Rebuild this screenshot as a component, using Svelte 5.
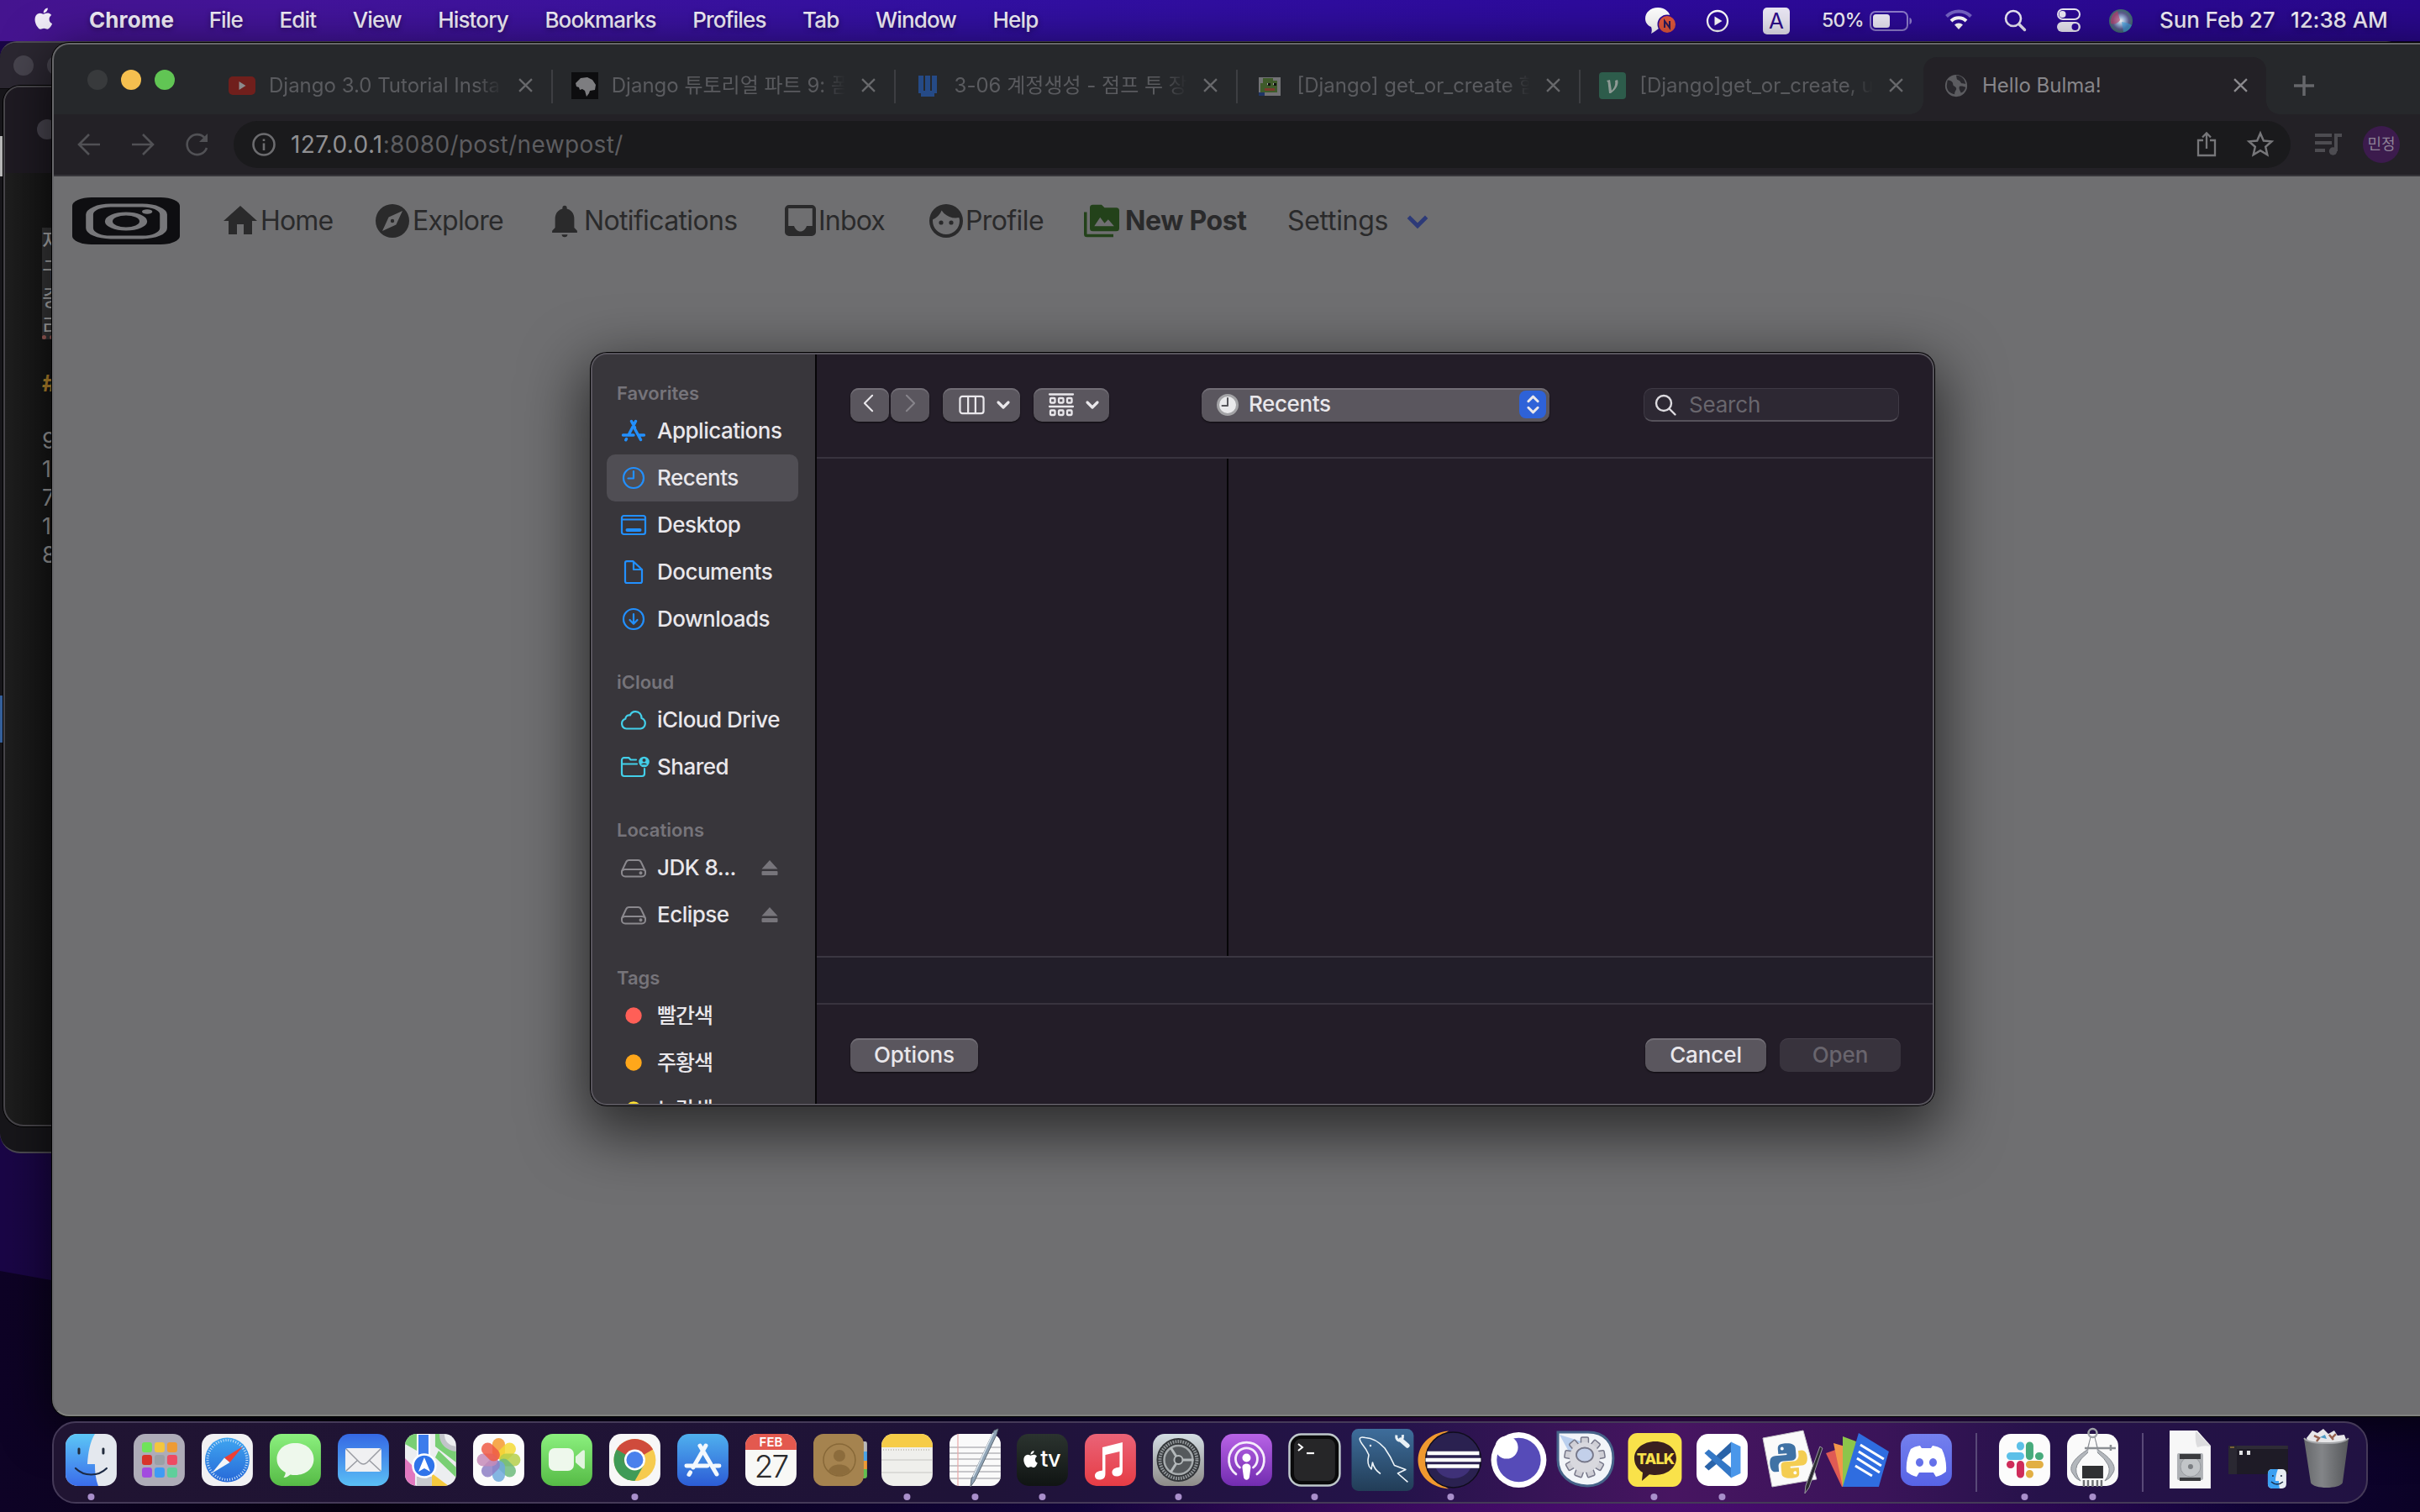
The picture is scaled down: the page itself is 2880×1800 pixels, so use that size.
<script>
  const menus = ['File', 'Edit', 'View', 'History', 'Bookmarks', 'Profiles', 'Tab', 'Window', 'Help'];

  const tabs = [
    { icon: 'youtube', title: 'Django 3.0 Tutorial Insta' },
    { icon: 'mdn', title: 'Django 튜토리얼 파트 9: 폼(' },
    { icon: 'wiki', title: '3-06 계정생성 - 점프 투 장고' },
    { icon: 'pepe', title: '[Django] get_or_create 함' },
    { icon: 'velog', title: '[Django]get_or_create, u' },
    { icon: 'globe', title: 'Hello Bulma!', active: true },
  ];

  const links = [
    { icon: 'home', label: 'Home' },
    { icon: 'compass', label: 'Explore' },
    { icon: 'bell', label: 'Notifications' },
    { icon: 'inbox', label: 'Inbox' },
    { icon: 'face', label: 'Profile' },
    { icon: 'album', label: 'New Post', strong: true },
  ];

  const groups = [
    {
      title: 'Favorites',
      items: [
        { icon: 'apps', label: 'Applications' },
        { icon: 'clock', label: 'Recents', selected: true },
        { icon: 'desk', label: 'Desktop' },
        { icon: 'doc', label: 'Documents' },
        { icon: 'download', label: 'Downloads' },
      ],
    },
    {
      title: 'iCloud',
      items: [
        { icon: 'cloud', label: 'iCloud Drive' },
        { icon: 'shared', label: 'Shared' },
      ],
    },
    {
      title: 'Locations',
      items: [
        { icon: 'disk', label: 'JDK 8...', eject: true },
        { icon: 'disk', label: 'Eclipse', eject: true },
      ],
    },
    {
      title: 'Tags',
      items: [
        { icon: 'red', label: '빨간색', tag: true },
        { icon: 'orange', label: '주황색', tag: true },
        { icon: 'yellow', label: '노란색', tag: true },
      ],
    },
  ];

  const dockApps = [
    { name: 'finder', open: true }, { name: 'launchpad' }, { name: 'safari' }, { name: 'messages' },
    { name: 'mail' }, { name: 'maps' }, { name: 'photos' }, { name: 'facetime' },
    { name: 'chrome', open: true }, { name: 'appstore' }, { name: 'calendar' }, { name: 'contacts' },
    { name: 'notes', open: true }, { name: 'textedit', open: true }, { name: 'tv', open: true }, { name: 'music' },
    { name: 'settings', open: true }, { name: 'podcasts' }, { name: 'terminal', open: true }, { name: 'mysql' },
    { name: 'eclipse', open: true }, { name: 'insomnia' }, { name: 'automator' }, { name: 'talk', open: true },
    { name: 'vscode', open: true }, { name: 'python' }, { name: 'docs' }, { name: 'discord' },
  ];
  const dockTools = [{ name: 'slack', open: true }, { name: 'caliper', open: true }];
  const dockFiles = [{ name: 'diskimage' }, { name: 'window' }, { name: 'trash' }];

  const pads = ['#6fe35a', '#f3c63f', '#ee9b35', '#d8342b', '#9aa0a6', '#ee4a63', '#a24be0', '#3f9bf5', '#5fcf9b'];
  const petals = ['#f59a2f', '#f3d935', '#b5cf4a', '#6fbb7c', '#6fa9dc', '#8d7fc4', '#c58bb8', '#ee5a45'];
  const cogs = [0, 40, 80, 120, 160, 200, 240, 280, 320];
  const scribbles = ['9', '1', '7', '1', '8'];
</script>

{#snippet appleShape()}
  <path d="M20.6 16.9c0-3.2 2.600-4.700 2.700-4.800-1.500-2.200-3.800-2.500-4.600-2.500-2-.2-3.800 1.200-4.800 1.200s-2.500-1.100-4.100-1.100c-2.100 0-4.100 1.200-5.200 3.100-2.200 3.900-.6 9.600 1.600 12.700 1.100 1.500 2.300 3.300 4 3.200 1.600-.1 2.200-1 4.100-1s2.500 1 4.200 1c1.700 0 2.800-1.600 3.900-3.100 1.200-1.800 1.700-3.500 1.700-3.600-.1 0-3.500-1.300-3.500-5.100zM17.500 7.600c.9-1.100 1.500-2.500 1.300-4-1.300.1-2.800.9-3.700 1.900-.8.9-1.500 2.400-1.300 3.900 1.400.1 2.800-.7 3.700-1.800z" />
{/snippet}

{#snippet tabIcon(name)}
  <svg class="favicon" viewBox="0 0 32 32">
    {#if name === 'youtube'}
      <rect x="0" y="5" width="32" height="22" rx="5" fill="#701f1c" /><path d="M12.500 11v10l8-5z" fill="#8b8b8d" />
    {:else if name === 'mdn'}
      <rect width="32" height="32" fill="#0d0d0f" /><path d="M5 13l3-3 3-3 8-1 6 3 4 6-1 6-6 1-1 3-3 4-2-7-3-2-3 1-1-3-3-1z" fill="#7d7d80" />
    {:else if name === 'wiki'}
      <path d="M5 4h6v18h2V4h6v18h2V4h6v21h-3v4H8v-4H5z" fill="#254a86" />
    {:else if name === 'pepe'}
      <rect x="3" y="6" width="26" height="22" fill="#727275" /><path d="M8 7h12v3h5v14H5V13h3z" fill="#3f5b2a" /><path d="M13 13h4v2h-4zM20 13h4v2h-4z" fill="#a9a9ab" /><path d="M14 13h3v3h-3zM21 13h3v3h-3z" fill="#111" /><path d="M10 19h12v3H10z" fill="#7c3a2c" /><path d="M3 24h7v4H3z" fill="#1f3566" />
    {:else if name === 'velog'}
      <rect width="32" height="32" rx="4" fill="#2d5c4b" /><path d="M9 10l4-1 2 13c3-3 5-7 4-12l3-1c2 5-2 12-8 16h-2L10.500 12z" fill="#8e9a95" />
    {:else}
      <circle cx="16" cy="16" r="14" fill="#5c5c60" /><path d="M5 9c4 0 7 2 7 5s3 2 4 5-2 3-2 8c-6-1-10-5-10-11zM16 3c1 4 0 5 3 6s2 4 5 4 4 1 4 1c-1-6-5-11-12-11zM20 17c3-1 5 0 8 1-1 4-3 6-6 7-1-3-3-5-2-8z" fill="#29282d" />
    {/if}
  </svg>
{/snippet}

{#snippet navIcon(name)}
  <svg class="nav-icon" viewBox="0 0 48 48">
    {#if name === 'home'}
      <path d="M20 40V28h8v12h10V24h6L24 6 4 24h6v16z" />
    {:else if name === 'compass'}
      <path d="M24 21.800a2.200 2.200 0 1 0 0 4.400 2.200 2.200 0 0 0 0-4.400zM24 4a20 20 0 1 0 0 40 20 20 0 0 0 0-40zm4.400 24.400L12 36l7.600-16.400L36 12z" />
    {:else if name === 'bell'}
      <path d="M24 46a4 4 0 0 0 4-3.500h-8A4 4 0 0 0 24 46zm13-13V21c0-7-4-12-10-13.500V6a3 3 0 0 0-6 0v1.500C15 9 11 14 11 21v12l-4 4.500V40h34v-2.500z" />
    {:else if name === 'inbox'}
      <path fill-rule="evenodd" d="M10 5h27a5 5 0 0 1 5 5v27a5 5 0 0 1-5 5H10a5 5 0 0 1-5-5V10a5 5 0 0 1 5-5zm-.8 4V30H16c1.500 4 4 6.500 7.500 6.500s6-2.500 7.500-6.500h6.800V9z" />
    {:else if name === 'face'}
      <path fill-rule="evenodd" d="M24 4a20 20 0 1 0 0 40 20 20 0 0 0 0-40zm0 36A16 16 0 0 1 8 24c0-.6.100-1.200.200-1.700 4.700-2 8.500-6 10.400-10.800A20 20 0 0 0 39.300 20c.5 1.300.7 2.600.7 4a16 16 0 0 1-16 16z" /><circle cx="18" cy="26" r="2.600" /><circle cx="30" cy="26" r="2.600" />
    {:else}
      <path fill-rule="evenodd" d="M4 12H0v30a4 4 0 0 0 4 4h36v-4H4zM44 6H28l-4-4H12a4 4 0 0 0-4 4v28a4 4 0 0 0 4 4h32a4 4 0 0 0 4-4V10a4 4 0 0 0-4-4zM14 31l8-12 6 8 5-5 8 9z" />
    {/if}
  </svg>
{/snippet}

{#snippet sideIcon(name)}
  <svg class="side-icon {name}" viewBox="0 0 34 34">
    {#if name === 'apps'}
      <g stroke-width="3.400"><path d="M19.500 5.500L11.500 21M14.500 5.500l4 7.500M18.700 15l6.800 12.500M4.500 22H17M23 22h6.500" /><path d="M8.500 26.500l-.8 1.300" /></g>
    {:else if name === 'clock'}
      <circle cx="17" cy="17" r="12" /><path d="M17 9v8.500h-6.500" />
    {:else if name === 'desk'}
      <rect x="3" y="6" width="28" height="22" rx="2.500" /><path d="M3 10.500h28" /><path d="M9.500 23h15" stroke-width="4" />
    {:else if name === 'doc'}
      <path d="M9 4.200h7.500L27 14v14a2 2 0 0 1-2 2H9a2 2 0 0 1-2-2V6.200a2 2 0 0 1 2-2zM17 4.500V14h9.500" />
    {:else if name === 'download'}
      <circle cx="17" cy="17" r="12" /><path d="M17 11v11.500M12.500 18l4.500 4.700 4.500-4.700" />
    {:else if name === 'cloud'}
      <path d="M8.500 27.500a6 6 0 0 1-1.200-11.700c.2-3.300 3-5 5.600-4.300 1.200-3 3.700-4.500 6.600-4.300 4.300.3 7 3.500 7 7.800a6.500 6.500 0 0 1-1 12.500z" />
    {:else if name === 'shared'}
      <path d="M20 8.500h-6.500l-2-2.300H5.500a2.500 2.500 0 0 0-2.500 2.500V25a3 3 0 0 0 3 3h21a3 3 0 0 0 3-3v-6M3 13.500h18" /><circle cx="29.500" cy="11" r="6.300" class="solid" /><circle cx="29.500" cy="9" r="2" class="hole" /><path d="M26 14.300c1-2.300 6-2.300 7 0z" class="hole" />
    {:else if name === 'disk'}
      <path d="M3 21l5-10.500c.7-1.600 1.700-2.500 3.500-2.500h11c1.800 0 2.800.9 3.500 2.500L31 21v2.500a4 4 0 0 1-4 4H7a4 4 0 0 1-4-4zM3.500 20.500c1-1 2-1.500 3.500-1.500h20c1.500 0 2.500.5 3.500 1.500" /><circle cx="25.500" cy="23.300" r="1" />
    {:else}
      <circle cx="17" cy="17" r="9.700" class="dot" />
    {/if}
  </svg>
{/snippet}

{#snippet dockIcon(name)}
  {#if name === 'finder'}
    <rect x="10" y="15" width="61" height="62" rx="14" fill="#e4e8ee" />
    <path d="M24 15h21c-6 10-8 22-9 36h9c0 10 1 18 4 26H24a14 14 0 0 1-14-14V29a14 14 0 0 1 14-14z" fill="url(#g-finder)" />
    <path d="M26 33v5M55 33v5" stroke="#222c3c" stroke-width="3" stroke-linecap="round" /><path d="M22 56c10 10 27 10 37 0" stroke="#1c2a44" stroke-width="2.200" fill="none" stroke-linecap="round" />
  {:else if name === 'launchpad'}
    <rect x="10" y="15" width="61" height="62" rx="14" fill="#aeacb8" />
    {#each pads as c, i}<rect x={20 + (i % 3) * 15} y={25 + Math.floor(i / 3) * 15} width="12" height="12" rx="3" fill={c} />{/each}
  {:else if name === 'safari'}
    <rect x="10" y="15" width="61" height="62" rx="14" fill="#f1f1f3" /><circle cx="40.500" cy="46" r="26.500" fill="url(#g-blue)" />
    <circle cx="40.500" cy="46" r="23.500" fill="none" stroke="#cfe4f8" stroke-width="3" stroke-dasharray="1 2" />
    <path d="M59 30L37 43.500l6.500 5.500z" fill="#ee4035" /><path d="M22 62l15-18.500 6.500 5.500z" fill="#f4f6f8" />
  {:else if name === 'messages'}
    <rect x="10" y="15" width="61" height="62" rx="14" fill="url(#g-green)" /><path d="M40.500 26c13 0 22 8 22 19s-9 19-22 19c-2 0-4-.2-6-.6-2 2-5 3.200-8 3.600 1.500-2 2.300-4 2.300-6-6.300-3.500-10.300-9-10.300-16 0-11 9-19 22-19z" fill="#eef8ec" />
  {:else if name === 'mail'}
    <rect x="10" y="15" width="61" height="62" rx="14" fill="url(#g-mail)" /><rect x="19" y="32" width="43" height="28" rx="3" fill="#f0f0f2" /><path d="M20 33l16 16q4.500 4 9 0l16-16M20 59l14-13M61 59L47 46" fill="none" stroke="#9a9ca3" stroke-width="1.500" />
  {:else if name === 'maps'}
    <g clip-path="url(#squircle)"><rect x="10" y="15" width="61" height="62" fill="#eceef0" /><path d="M10 15h14v20L10 27zM50 35l21 20v12L46 43z" fill="#79cf74" /><path d="M46 15h8c0 14 8 20 17 20v14L46 30z" fill="#79cf74" /><path d="M54 15c0 12 8 17 17 18" stroke="#c2c4ca" stroke-width="6" fill="none" /><path d="M10 44l12 12v21H10z" fill="#e178bf" /><path d="M42 62l20 15H42z" fill="#f5c93e" /><path d="M25 15h14v42H25z" fill="#3c7cec" stroke="#fff" stroke-width="2" /><path d="M24 66h18v11H24z" fill="#c8cace" /></g>
    <circle cx="33" cy="53" r="13.500" fill="#2f74ea" stroke="#fff" stroke-width="2.500" /><path d="M33 43l7 17-7-4-7 4z" fill="#fff" />
  {:else if name === 'photos'}
    <rect x="10" y="15" width="61" height="62" rx="14" fill="#fbfbfb" />
    {#each petals as c, i}<rect x="33" y="20" width="15" height="25" rx="7.500" fill={c} opacity=".85" transform="rotate({i * 45} 40.500 46)" />{/each}
  {:else if name === 'facetime'}
    <rect x="10" y="15" width="61" height="62" rx="14" fill="url(#g-green)" /><rect x="19" y="32" width="30" height="27" rx="7" fill="#eef8ec" /><path d="M51 42l8-7q3-2 3 1v19q0 3-3 1l-8-7z" fill="#e2f4df" />
  {:else if name === 'chrome'}
    <rect x="10" y="15" width="61" height="62" rx="14" fill="#f7f7f7" /><circle cx="40.500" cy="46" r="25" fill="#f6cb4f" /><path d="M40.500 46L18.850 33.500A25 25 0 0 1 62.150 33.500z" fill="#cf4b3c" /><path d="M18.850 33.500A25 25 0 0 0 40.500 71L51 52.500 40.500 46z" fill="#3f9b57" /><path d="M18.850 33.500L29.500 52 40.500 46V34h21.700z" fill="#cf4b3c" /><path d="M18.850 33.500L29.700 52.200 40.500 46z" fill="#3f9b57" /><circle cx="40.500" cy="46" r="12.500" fill="#fff" /><circle cx="40.500" cy="46" r="10" fill="#4a80ec" />
  {:else if name === 'appstore'}
    <rect x="10" y="15" width="61" height="62" rx="14" fill="url(#g-store)" /><g stroke="#f3f8fd" stroke-width="5" stroke-linecap="round"><path d="M44 29L29 55M37 29l20 34M21 53h25M55 53h5" /><path d="M25.500 61l-1.500 2.500" /></g>
  {:else if name === 'calendar'}
    <rect x="10" y="15" width="61" height="62" rx="14" fill="#f8f8f6" /><path d="M10 34v-5a14 14 0 0 1 14-14h33a14 14 0 0 1 14 14v5z" fill="#e3594f" /><text x="40.500" y="30" class="cal-month">FEB</text><text x="40.500" y="67" class="cal-day">27</text>
  {:else if name === 'contacts'}
    <path d="M66 24h6q2 0 2 3v9h-8z" fill="#b9b9b9" /><path d="M66 36h8v11h-8z" fill="#4ba3e8" /><path d="M66 47h8v10h-8z" fill="#ee9a35" /><path d="M66 57h8v8q0 3-3 3h-5z" fill="#63bf4f" />
    <rect x="10" y="15" width="60" height="62" rx="12" fill="#a5834f" /><circle cx="41" cy="46" r="19" fill="none" stroke="#876838" stroke-width="1.500" /><circle cx="41" cy="41" r="7" fill="#8c6c3c" /><path d="M28 59c3-10 23-10 26 0-7 7-19 7-26 0z" fill="#8c6c3c" />
  {:else if name === 'notes'}
    <rect x="10" y="15" width="61" height="62" rx="14" fill="#efefec" /><path d="M10 31v-2a14 14 0 0 1 14-14h33a14 14 0 0 1 14 14v2z" fill="#f6cc48" /><path d="M10 46h61M10 61h61" stroke="#d3d3d0" stroke-width="1.500" /><path d="M12 34h57" stroke="#c9c6bc" stroke-width="2" stroke-dasharray="1 2" />
  {:else if name === 'textedit'}
    <rect x="10" y="15" width="61" height="62" rx="12" fill="#fafafa" /><path d="M10 31h61M10 38h61M10 45h61M10 53h61M10 60h61M10 68h61" stroke="#b6b6ba" stroke-width="1.500" /><path d="M20 15v62" stroke="#e9a8a8" stroke-width="1.200" /><path d="M63 11l5-2-2 7-26 55-5 7 1-9z" fill="#8fa3b5" stroke="#5b6772" stroke-width="1" /><path d="M62 14L38 66" stroke="#dfe9f1" stroke-width="1.500" />
  {:else if name === 'tv'}
    <rect x="10" y="15" width="61" height="62" rx="14" fill="url(#g-tv)" /><g transform="translate(15.500 32) scale(.8)" fill="#fff">{@render appleShape()}</g><text x="50" y="54.500" class="tv-label">tv</text>
  {:else if name === 'music'}
    <rect x="10" y="15" width="61" height="62" rx="14" fill="url(#g-music)" /><path d="M31 31l24-6v33c0 5-2 7-6 7.500-4 .5-6.500-1.500-6.500-4.500 0-4 3-5.500 9-6.500V36l-17 4v22c0 5-2 7-6 7.500-4 .5-6.500-1.500-6.500-4.500 0-4 3-5.500 9-6.500z" fill="#fff" />
  {:else if name === 'settings'}
    <rect x="10" y="15" width="61" height="62" rx="14" fill="url(#g-grey)" /><circle cx="40.500" cy="46" r="26" fill="#34373a" /><circle cx="40.500" cy="46" r="22" fill="none" stroke="#8f9497" stroke-width="4" stroke-dasharray="1.800 1.200" /><circle cx="40.500" cy="46" r="17" fill="#55595c" stroke="#a6abad" stroke-width="2.500" /><path d="M40.500 46L31 31M40.500 46h18M40.500 46L31 61" stroke="#b4b9bb" stroke-width="3" /><circle cx="40.500" cy="46" r="5" fill="#43474a" stroke="#b4b9bb" stroke-width="2" />
  {:else if name === 'podcasts'}
    <rect x="10" y="15" width="61" height="62" rx="14" fill="url(#g-pod)" /><g fill="none" stroke="#f5ecfb" stroke-width="2.800" stroke-linecap="round"><path d="M28 63a21 21 0 1 1 25 0" /><path d="M32.500 55a13 13 0 1 1 16 0" /></g><circle cx="40.500" cy="43.500" r="5" fill="#fff" /><path d="M35.500 55c0-6 10-6 10 0l-1.500 11c-.5 5-6.500 5-7 0z" fill="#fff" />
  {:else if name === 'terminal'}
    <rect x="10.500" y="15.500" width="60" height="61" rx="14" fill="#0a0a0b" stroke="#bfc8cb" stroke-width="2.500" /><rect x="16" y="21" width="49" height="50" rx="8" fill="#262628" /><path d="M21 27l5 4-5 4" stroke="#fff" stroke-width="2" fill="none" /><path d="M31 38h9" stroke="#fff" stroke-width="2.200" />
  {:else if name === 'mysql'}
    <rect x="3.500" y="9" width="74" height="74" rx="8" fill="url(#g-mysql)" /><path d="M38 62.500Q30 57 28.500 49L27 57Q21 52 24 40 21 33 16 27 9 17 20 19.500 32 20 43 32 50 42 54.500 52.500L68 57.500 58.500 62 70.500 72.500" fill="none" stroke="#eef5f9" stroke-width="1.600" stroke-linejoin="round" /><circle cx="26" cy="29" r="1.200" fill="#fff" /><path d="M60 16v4.500l3-.5.500-5" fill="none" stroke="#e8f0f5" stroke-width="0" /><path d="M62 22l8 7" stroke="#e8f0f5" stroke-width="5.500" stroke-linecap="round" /><path d="M57 16.500q-1 5 3 6.500 5 0 4.500-7" fill="none" stroke="#e8f0f5" stroke-width="3" />
  {:else if name === 'eclipse'}
    <path d="M38 11.500C-10.500 16-10.500 76 38 80.500 15 68 15 24 38 11.500z" fill="#f0992f" /><circle cx="43.600" cy="46" r="33" fill="#2a2150" stroke="#0f0d1c" stroke-width="1.500" /><path d="M23 56h41c-7 16-34 16-41 0z" fill="#3f3178" /><path d="M12.500 38h62M10.500 46h66M12.500 53.500h62" stroke="#fff" stroke-width="4.300" />
  {:else if name === 'insomnia'}
    <circle cx="40.500" cy="46" r="33" fill="#fff" /><circle cx="40.500" cy="46" r="26.200" fill="#564bb8" /><circle cx="26" cy="31" r="13.600" fill="#fff" />
  {:else if name === 'automator'}
    <path d="M6 13h36c20 0 30 13 30 31S61 77 41 77 6 64 6 46z" fill="#f2f5f9" stroke="#466389" stroke-width="3" /><path d="M8 16l26 8-14 14z" fill="#b9cfee" /><g fill="#cfcfd6" stroke="#77788a" stroke-width="1.500">{#each cogs as a}<rect x="33.500" y="19" width="9" height="11" rx="1.500" transform="rotate({a} 38 43)" />{/each}</g><circle cx="38" cy="43" r="18" fill="#d8d8de" /><ellipse cx="38" cy="40" rx="10" ry="8.500" fill="#c3d0ea" stroke="#77788a" stroke-width="1.800" />
  {:else if name === 'talk'}
    <g transform="translate(1.500 0)"><rect x="8" y="14" width="64" height="64" rx="11" fill="#f9e24a" /><path d="M40.500 24c14.500 0 25 9 25 20s-10.500 20-25 20c-2 0-5-.3-7-.8L24.500 71l1-10c-6.500-4-10-10-10-17 0-11 10.500-20 25-20z" fill="#39201f" /><text x="40.500" y="51" class="talk-label">TALK</text></g>
  {:else if name === 'vscode'}
    <rect x="10" y="15" width="61" height="62" rx="14" fill="#fff" /><path d="M51.500 24.500L19.500 54l5 4.500 27-22z" fill="#2a63a8" /><path d="M19.500 38l5-4.500 27 22v12z" fill="#3478c6" /><path d="M51 24.500l11.500 5.500v32L51 67.500z" fill="#4a97ea" />
  {:else if name === 'python'}
    <path d="M8 20l48-9 16 58-53 9z" fill="#fafafa" stroke="#c6c6ca" stroke-width="1" /><g transform="translate(12 22) rotate(-5 26 24)"><path d="M24 4c-9 0-9 3-9 8v4h10v2H11c-6 0-7 5-7 10s2 9 6 9h4v-6c0-4 3-6 6-6h10c4 0 6-2 6-6v-8c0-5-5-7-12-7z" fill="#3f72a5" /><path d="M29 46c9 0 9-3 9-8v-4H28v-2h14c5 0 7-4 7-9s-2-9-6-9h-4v5c0 4-3 7-6 7H22c-4 0-5 2-5 6v8c0 4 5 6 12 6z" fill="#f4cd52" /><circle cx="20" cy="10" r="2" fill="#fff" /><circle cx="33" cy="40" r="2" fill="#fff" /></g><path d="M76 30l3 2-16 47-5 7 1-9z" fill="#2b2b30" stroke="#9b9ba2" stroke-width="1" />
  {:else if name === 'docs'}
    <path d="M2 38l14-5 13 45h-8z" fill="#df5a54" /><path d="M11 26l14 4 5 48h-8z" fill="#f3964a" /><path d="M22 18l16 6-4 54H22z" fill="#8cc54b" /><path d="M41 14l36 22-12 42H22z" fill="#2f6de0" /><path d="M43 28l28 17M41 36l27 17M39 44l27 17M37 53l20 12" stroke="#fff" stroke-width="3" />
  {:else if name === 'discord'}
    <rect x="10" y="15" width="61" height="62" rx="14" fill="url(#g-discord)" /><path fill-rule="evenodd" d="M33 29c-5 1-8 2-11 4-4 8-6 18-5 27 4 3 7 5 12 6l3-5h17l3 5c5-1 8-3 12-6 1-9-1-19-5-27-3-2-6-3-11-4l-2 3h-11zM32.500 44a4.500 5 0 1 0 .1 0zM48.500 44a4.500 5 0 1 0 .1 0z" fill="#fff" />
  {:else if name === 'slack'}
    <rect x="10" y="15" width="61" height="62" rx="14" fill="#fcfcfc" /><g stroke-width="9" stroke-linecap="round"><path d="M35.500 29v1M23.500 41.500h12" stroke="#5cc0e8" /><path d="M46.500 29v12.500M57.500 41.500h1" stroke="#47ab7c" /><path d="M35.500 51.500V63M24 51.500h-.5" stroke="#cf2c5a" /><path d="M46.500 51.500h12M46.500 63v-.5" stroke="#e2af44" /></g>
  {:else if name === 'caliper'}
    <rect x="10" y="15" width="61" height="62" rx="14" fill="#fafafa" /><circle cx="40.500" cy="14" r="5" fill="none" stroke="#9fa3a8" stroke-width="2.500" /><path d="M38 19L34 34C18 44 12 54 16 61q4 8 10 10-8-10-4-19 4-8 13-15M43 19l4 15C63 44 69 54 65 61q-4 8-10 10 8-10 4-19-4-8-13-15" fill="#b3b7bc" stroke="#868a90" stroke-width="1" /><path d="M31 32h37M62 28v7" stroke="#8b8f94" stroke-width="2.500" /><path d="M28 53h25v15H28z" fill="#303133" /><path d="M30 70v8M35 70v8M40.500 70v8M46 70v8M51 70v8" stroke="#707276" stroke-width="2.500" />
  {:else if name === 'diskimage'}
    <path d="M16 11h33l16 18v51H16z" fill="#f7f7f7" /><path d="M47 11q-1 14 2 20 8-3 16-1z" fill="#dcdcde" /><rect x="25" y="38" width="31" height="32" rx="2" fill="#aeb1b5" /><circle cx="41" cy="54" r="12" fill="#c2c5c8" stroke="#96999d" stroke-width="1" /><circle cx="41" cy="54" r="3" fill="#7b7e82" /><path d="M28 39h25v6H28zM28 67h25v4H28z" fill="#3a3b3e" />
  {:else if name === 'window'}
    <rect x="5" y="29" width="71" height="34" fill="#1e1b26" /><path d="M5 29h10v34H5z" fill="#2a2832" /><path d="M15 29h61v4H15z" fill="#2e2b36" /><path d="M7 31h5" stroke="#c99a3e" /><path d="M18 35h4v5h-4zM27 35h4v5h-4z" fill="#e3e3e6" /><rect x="52" y="57" width="22" height="23" rx="5" fill="#e8edf2" /><path d="M57 57h7q-3 8-3 14h4q0 5 1 9h-9a5 5 0 0 1-5-5V62a5 5 0 0 1 5-5z" fill="#3ba0f2" /><path d="M56 72q7 6 14 0M58 64v2M68 64v2" stroke="#1c2a44" stroke-width="1.500" fill="none" />
  {:else if name === 'trash'}
    <path d="M17 20l7-9 6 3 7-5 6 6 7-4 4 6 8-1 3 8-20 6H20z" fill="#e7e7e9" /><path d="M26 17l6 3-3 4M44 16l5 6M52 15l-5 5" stroke="#96624f" stroke-width="2.500" fill="none" /><path d="M33 19l6-3 2 5z" fill="#4d9bc4" /><path d="M14 21c8 7 45 7 53 0l-7 52c-3 8-35 8-38 0z" fill="url(#g-trash)" /><path d="M14 20c7 8 46 8 53 0" fill="none" stroke="#a5a7aa" stroke-width="2" />
  {/if}
{/snippet}

{#snippet dockCell(app)}
  <svg class="dock-cell" viewBox="0 0 81 98">
    {@render dockIcon(app.name)}
    {#if app.open}<circle cx="40.500" cy="90" r="4" fill="#a98fcb" />{/if}
  </svg>
{/snippet}

{#snippet chevron()}
  <svg class="chev" viewBox="0 0 16 10"><path d="M2 2l6 6 6-6" /></svg>
{/snippet}

<svg class="defs" width="0" height="0" aria-hidden="true">
  <defs>
    <clipPath id="squircle"><rect x="10" y="15" width="61" height="62" rx="14" /></clipPath>
    <linearGradient id="g-finder" x2="0" y2="1"><stop stop-color="#5cc6f6" /><stop offset="1" stop-color="#3a6cea" /></linearGradient>
    <linearGradient id="g-blue" x2="0" y2="1"><stop stop-color="#3fa5f0" /><stop offset="1" stop-color="#2769d8" /></linearGradient>
    <linearGradient id="g-green" x2="0" y2="1"><stop stop-color="#8bf07e" /><stop offset="1" stop-color="#56bb46" /></linearGradient>
    <linearGradient id="g-mail" x2="0" y2="1"><stop stop-color="#3568e4" /><stop offset="1" stop-color="#5bbff5" /></linearGradient>
    <linearGradient id="g-store" x2="0" y2="1"><stop stop-color="#4fb0ee" /><stop offset="1" stop-color="#2c5cd6" /></linearGradient>
    <linearGradient id="g-tv" x2="0" y2="1"><stop stop-color="#2b332f" /><stop offset="1" stop-color="#101413" /></linearGradient>
    <linearGradient id="g-music" x2="0" y2="1"><stop stop-color="#ea6377" /><stop offset="1" stop-color="#e63c45" /></linearGradient>
    <linearGradient id="g-grey" x2="0" y2="1"><stop stop-color="#d3dde3" /><stop offset="1" stop-color="#8d8b88" /></linearGradient>
    <linearGradient id="g-pod" x2="0" y2="1"><stop stop-color="#b863e6" /><stop offset="1" stop-color="#722cb0" /></linearGradient>
    <linearGradient id="g-mysql" x2="0" y2="1"><stop stop-color="#3e6d9b" /><stop offset="1" stop-color="#223d57" /></linearGradient>
    <linearGradient id="g-discord" x2="0" y2="1"><stop stop-color="#7480ee" /><stop offset="1" stop-color="#5763e6" /></linearGradient>
    <linearGradient id="g-trash"><stop stop-color="#66686b" /><stop offset=".4" stop-color="#838588" /><stop offset="1" stop-color="#55575a" /></linearGradient>
    <radialGradient id="g-siri"><stop stop-color="#fff" /><stop offset=".35" stop-color="#9cb6dc" /><stop offset=".7" stop-color="#5f5d92" /><stop offset="1" stop-color="#3d6f6c" /></radialGradient>
  </defs>
</svg>

<div class="screen">
  <header class="menubar">
    <svg class="apple" viewBox="0 0 28 34">{@render appleShape()}</svg>
    <nav class="menus">
      <strong>Chrome</strong>
      {#each menus as m}<span>{m}</span>{/each}
    </nav>
    <div class="status">
      <svg class="st-chat" viewBox="0 0 38 34"><path d="M16 1c9 0 15 6 15 13s-6 12-14 12c-3 2-5 4-9 6 1-3 1-5 0-8C3 22 1 18 1 14 1 7 7 1 16 1z" fill="#fff" /><circle cx="27" cy="21" r="11.500" fill="#2f0a9b" /><circle cx="27" cy="21" r="10" fill="#e2573c" /><path d="M24 25v-8l6 8v-8" fill="none" stroke="#2b1b5c" stroke-width="2" /></svg>
      <svg class="st-play" viewBox="0 0 28 28"><circle cx="14" cy="14" r="12" fill="none" stroke="#fff" stroke-width="2.300" /><path d="M10.500 8.500v11l9-5.500z" fill="#fff" /></svg>
      <span class="st-input">A</span>
      <span class="st-pct">50%</span>
      <svg class="st-batt" viewBox="0 0 52 24"><rect x="1" y="1" width="44" height="22" rx="6" fill="none" stroke="#8d7ccb" stroke-width="2" /><rect x="4" y="4" width="20" height="16" rx="3.500" fill="#ece9f6" /><path d="M47.500 8c3.500 1 3.500 7 0 8z" fill="#8d7ccb" /></svg>
      <svg class="st-wifi" viewBox="0 0 34 26"><path d="M2.500 9.500a20.500 20.500 0 0 1 29 0" fill="none" stroke="#7563c4" stroke-width="4" /><path d="M8 15a12.700 12.700 0 0 1 18 0" fill="none" stroke="#fff" stroke-width="4" /><path d="M12 19.500a7 7 0 0 1 10 0L17 25z" fill="#fff" /></svg>
      <svg class="st-search" viewBox="0 0 27 27"><circle cx="11" cy="11" r="9" fill="none" stroke="#ece9f6" stroke-width="2.600" /><path d="M18 18l6.500 6.500" stroke="#ece9f6" stroke-width="3.400" stroke-linecap="round" /></svg>
      <svg class="st-cc" viewBox="0 0 30 28"><rect x="2" y="0" width="26" height="12" rx="6" fill="none" stroke="#ece9f6" stroke-width="2" /><circle cx="7.500" cy="6" r="4" fill="#ece9f6" /><rect x="1" y="15" width="28" height="12" rx="6" fill="#ece9f6" /><circle cx="22.500" cy="21" r="4" fill="#2e0a9b" /></svg>
      <svg class="st-siri" viewBox="0 0 28 28"><circle cx="14" cy="14" r="14" fill="url(#g-siri)" /><path d="M2 17a9 9 0 0 0 11-4L10 2A14 14 0 0 0 2 17z" fill="#c63c68" opacity=".6" /><path d="M15 15q8 1 12 4-4 8-10 8z" fill="#3aa5e8" opacity=".6" /></svg>
      <span class="st-date">Sun Feb 27</span>
      <span class="st-time">12:38 AM</span>
    </div>
  </header>

  <div class="win back">
    <div class="back-bar"><i></i><i></i></div>
    <div class="back-white"></div>
    <div class="back-blue"></div>
  </div>

  <div class="win memo">
    <div class="memo-bar"><i></i></div>
    <div class="memo-body">
      <p class="picked">재<br />구<br />중<br />리</p>
      <p class="hash">#</p>
      {#each scribbles as s}<p>{s}</p>{/each}
    </div>
  </div>

  <main class="win browser">
    <div class="tabstrip">
      <div class="lights"><i></i><i class="min"></i><i class="max"></i></div>
      {#each tabs as t}
        <div class="tab" class:active={t.active}>
          {@render tabIcon(t.icon)}
          <span class="tab-title">{t.title}</span>
          <svg class="close" viewBox="0 0 16 16"><path d="M1 1l14 14M15 1L1 15" /></svg>
        </div>
      {/each}
      <svg class="plus" viewBox="0 0 24 24"><path d="M12 0v24M0 12h24" /></svg>
    </div>

    <div class="toolbar">
      <svg class="tool" viewBox="0 0 28 28"><path d="M27 14H2M14 2L2 14l12 12" /></svg>
      <svg class="tool" viewBox="0 0 28 28"><path d="M1 14h25M14 2l12 12-12 12" /></svg>
      <svg class="tool" viewBox="0 0 28 28"><path d="M26 18A12 12 0 1 1 23.500 6" /><path d="M27 1v10H17z" class="solid" /></svg>
      <div class="omnibox">
        <svg class="info" viewBox="0 0 28 28"><circle cx="14" cy="14" r="12.500" /><path d="M14 12.500V21M14 7.500V10" /></svg>
        <span class="url"><b>127.0.0.1</b>:8080/post/newpost/</span>
        <svg class="share" viewBox="0 0 24 30"><path d="M8 10H2v18h20V10h-6M12 20V2M7 6.500L12 1.500l5 5" /></svg>
        <svg class="star" viewBox="0 0 30 30"><path d="M15 2.500l3.600 8.300 9 .8-6.800 6 2 8.900L15 21.800l-7.800 4.700 2-8.900-6.800-6 9-.8z" /></svg>
      </div>
      <svg class="media" viewBox="0 0 34 28"><path d="M1 3h20M1 12h20M1 21h12" /><path d="M26 22V3h7" /><circle cx="22.500" cy="22" r="4.700" class="solid" /></svg>
      <span class="avatar">민정</span>
    </div>

    <section class="page">
      <svg class="brand" viewBox="0 0 56 56" preserveAspectRatio="none"><rect width="56" height="56" rx="10" fill="#0e0e11" /><rect x="9" y="9.500" width="38.500" height="38" rx="11" fill="none" stroke="#77777a" stroke-width="3.800" /><circle cx="28" cy="28.500" r="9" fill="none" stroke="#77777a" stroke-width="4" /><circle cx="39" cy="17" r="2.700" fill="#77777a" /></svg>
      {#each links as l}
        <a class="link {l.icon}" class:strong={l.strong}>{@render navIcon(l.icon)}<span>{l.label}</span></a>
      {/each}
      <a class="link drop"><span>Settings</span><svg class="arrow" viewBox="0 0 26 16"><path d="M3 3l10 10L23 3" /></svg></a>
    </section>
  </main>

  <div class="dialog">
    <aside class="sidebar">
      {#each groups as g}
        <h2>{g.title}</h2>
        {#each g.items as it}
          <div class="row" class:selected={it.selected} class:tagged={it.tag}>
            {@render sideIcon(it.icon)}
            <span>{it.label}</span>
            {#if it.eject}<svg class="eject" viewBox="0 0 20 20"><path d="M10 1l9.500 10.500H.5zM1.500 14h17q1 0 1 1v3q0 1-1 1h-17q-1 0-1-1v-3q0-1 1-1z" /></svg>{/if}
          </div>
        {/each}
      {/each}
    </aside>
    <div class="picker">
      <div class="picker-bar">
        <button class="btn step"><svg viewBox="0 0 14 24"><path d="M12 2L2 12l10 10" /></svg></button>
        <button class="btn step off"><svg viewBox="0 0 14 24"><path d="M2 2l10 10L2 22" /></svg></button>
        <button class="btn view"><svg class="cols" viewBox="0 0 32 24"><rect x="1.500" y="1.500" width="29" height="21" rx="3" /><path d="M11.500 2v20M20.500 2v20" /></svg>{@render chevron()}</button>
        <button class="btn group"><svg class="grid" viewBox="0 0 30 28"><path d="M1 1.500h28M1 16h28" /><g><rect x="2" y="6" width="5.500" height="5.500" rx="1" /><rect x="12" y="6" width="5.500" height="5.500" rx="1" /><rect x="22" y="6" width="5.500" height="5.500" rx="1" /><rect x="2" y="20.500" width="5.500" height="5.500" rx="1" /><rect x="12" y="20.500" width="5.500" height="5.500" rx="1" /><rect x="22" y="20.500" width="5.500" height="5.500" rx="1" /></g></svg>{@render chevron()}</button>
        <button class="btn where">
          <svg class="dial" viewBox="0 0 26 26"><circle cx="13" cy="13" r="11.500" fill="#e9e9eb" stroke="#a3a3a6" stroke-width="3" /><path class="hands" d="M13 5v9H6.500" /></svg>
          <span>Recents</span>
          <i><svg viewBox="0 0 16 24"><path d="M2 8l6-6 6 6M2 16l6 6 6-6" /></svg></i>
        </button>
        <div class="search"><svg viewBox="0 0 26 26"><circle cx="11" cy="11" r="9" /><path d="M17.500 17.500L24.500 24.500" /></svg><span>Search</span></div>
      </div>
      <div class="columns"><div></div><div></div></div>
      <div class="strip"></div>
      <div class="actions">
        <button class="btn options">Options</button>
        <button class="btn cancel">Cancel</button>
        <button class="btn open">Open</button>
      </div>
    </div>
  </div>

  <footer class="dock">
    {#each dockApps as a}{@render dockCell(a)}{/each}
    <i class="sep"></i>
    {#each dockTools as a}{@render dockCell(a)}{/each}
    <i class="sep last"></i>
    {#each dockFiles as a}{@render dockCell(a)}{/each}
  </footer>
</div>

<style>
  :global(body) { margin: 0; background: #080214; overflow: hidden; }
  .screen { position: relative; width: 2880px; height: 1800px; overflow: hidden; font-family: Inter, "Noto Sans CJK KR", sans-serif; background: linear-gradient(90deg, #1a0646, #12042c); }
  .screen::before { content: ""; position: absolute; inset: 1513px 0 0; background: radial-gradient(ellipse 700px 200px at 1980px 267px, #490d70, transparent), linear-gradient(90deg, #0e0326, #06010f 15%, #12043a 45%, #35084f 65%, #12043a 90%, #0b0226); clip-path: polygon(0 0, 100px 18px, 100% 18px, 100% 100%, 0 100%); }
  .defs { position: absolute; }
  svg { display: block; flex: none; overflow: visible; }
  i { display: block; flex: none; }
  .win, .dialog, .dock { position: absolute; box-sizing: border-box; }

  .menubar { position: relative; display: flex; align-items: center; height: 49px; padding: 0 36px 0 38px; box-sizing: border-box; color: #f1edf8; font-size: 26px; line-height: 49px; background: linear-gradient(90deg, #45148f 0, #43149a 12%, #3210a2 40%, #2d0b9c 65%, #29088c); text-shadow: 0 2px 6px #0006; white-space: nowrap; }
  .apple { width: 28px; height: 34px; fill: #f1edf8; margin-top: -3px; }
  .menus { display: flex; gap: 43.500px; margin-left: 40px; font-weight: 500; letter-spacing: -.85px; margin-top: -3px; }
  .menus strong { font-weight: 700; letter-spacing: .1px; margin-right: -2px; }
  .status { display: flex; align-items: center; margin-left: auto; height: 48px; }
  .st-chat { width: 38px; height: 34px; margin-right: 35px; }
  .st-play { width: 28px; height: 28px; margin-right: 40px; }
  .st-input { width: 32px; height: 32px; border-radius: 5px; background: #ece9f6; color: #2e0a8a; line-height: 32px; text-align: center; font-size: 26px; text-shadow: none; margin-right: 38px; }
  .st-pct { width: 57px; font-size: 23px; font-weight: 500; letter-spacing: -.6px; }
  .st-batt { width: 52px; height: 24px; margin-right: 37px; }
  .st-wifi { width: 34px; height: 26px; margin-right: 37px; margin-top: -3px; }
  .st-search { width: 27px; height: 27px; margin-right: 35px; }
  .st-cc { width: 30px; height: 28px; margin-right: 33px; }
  .st-siri { width: 28px; height: 28px; margin-right: 32px; }
  .st-date { width: 156px; font-weight: 500; letter-spacing: -.1px; margin-top: -3px; }
  .st-time { width: 118px; font-weight: 500; letter-spacing: -.1px; margin-top: -3px; }

  .back { left: 0; top: 49px; width: 2860px; height: 1324px; border: 2px solid #4d4b52; border-left: 0; border-radius: 20px 20px 24px 24px; background: #17161a; overflow: hidden; }
  .back-bar { display: flex; gap: 16px; height: 55px; padding: 15px 16px; box-sizing: border-box; background: #2b2731; border-bottom: 1px solid #0b0a0d; }
  .back-bar i, .memo-bar i { width: 24px; height: 24px; border-radius: 50%; background: #47444e; }
  .back-white { width: 3px; height: 48px; margin-top: 56px; background: #b9b9b9; }
  .back-blue { width: 3px; height: 56px; margin-top: 618px; background: #35609c; }
  .memo { left: 4px; top: 102px; width: 400px; height: 1239px; border: 2px solid #47454a; border-radius: 20px 20px 24px 24px; background: linear-gradient(90deg, #1e1e1e, #151515 58px); box-shadow: 0 0 0 1px #000; overflow: hidden; }
  .memo-bar { height: 102px; padding: 38px 38px; box-sizing: border-box; background: #1e1a22; }
  .memo-body { padding: 65px 0 0 44px; color: #9a9a9b; font-size: 27px; line-height: 34px; }
  .memo-body p { margin: 0; }
  .memo-body .picked { width: 60px; height: 128px; background: #353536; color: #b0b0b0; border-bottom: 5px dotted #a2605c; }
  .memo-body .hash { margin: 36px 0 34px; color: #b5852c; font-weight: 700; }

  .browser { left: 62px; top: 51px; width: 2860px; height: 1635px; border: 2px solid #67676a; border-bottom-color: #80827f; border-radius: 20px; background: #6f6f71; box-shadow: 0 0 0 1px #000, 0 10px 60px #000a; overflow: hidden; display: flex; flex-direction: column; }
  .tabstrip { display: flex; align-items: stretch; height: 83px; background: #26282b; }
  .lights { display: flex; gap: 16px; align-items: center; width: 186px; padding: 0 0 0 40px; box-sizing: border-box; margin-top: -3px; height: 90px; }
  .lights i { width: 24px; height: 24px; border-radius: 50%; background: #383a3c; }
  .lights .min { background: #f5bf4f; }
  .lights .max { background: #61c554; }
  .tab { display: flex; align-items: center; position: relative; width: 407.800px; padding: 14px 24px 0 22px; box-sizing: border-box; color: #5a5b5f; font-size: 24px; }
  .tab:not(.active)::after { content: ""; position: absolute; right: 0; top: 30px; width: 2px; height: 40px; background: #3d3e42; }
  .tab:nth-child(6)::after { display: none; }
  .favicon { width: 32px; height: 32px; margin-right: 16px; }
  .tab-title { flex: 1; width: 0; height: 30px; line-height: 29px; white-space: nowrap; margin-right: 16px; mask-image: linear-gradient(90deg, #000 88%, transparent 99%); }
  .close { width: 17px; height: 17px; stroke: #67686b; stroke-width: 2.200; fill: none; }
  .tab.active { margin-top: 15px; padding: 0 22px 1px 24px; background: #232126; border-radius: 16px 16px 0 0; color: #87868a; }
  .tab.active .favicon { width: 30px; height: 30px; }
  .tab.active .tab-title { mask-image: none; }
  .tab.active::before, .tab.active::after { content: ""; position: absolute; bottom: 0; width: 16px; height: 16px; }
  .tab.active::before { left: -16px; background: radial-gradient(circle at 0 0, transparent 15.500px, #232126 16px); }
  .tab.active::after { right: -16px; background: radial-gradient(circle at 100% 0, transparent 15.500px, #232126 16px); }
  .tab.active .close { stroke: #8b8a8e; }
  .plus { width: 24px; height: 24px; stroke: #66676b; stroke-width: 3.500; margin: 37px 0 0 33px; }

  .toolbar { display: flex; align-items: center; height: 74px; padding-left: 28px; background: #232126; border-bottom: 2px solid #363539; box-sizing: border-box; }
  .toolbar svg { fill: none; stroke: #515155; stroke-width: 2.600; }
  .toolbar .solid { fill: #515155; stroke: none; }
  .tool { width: 28px; height: 28px; margin-right: 36px; }
  .tool:nth-child(3) { margin-right: 30px; }
  .omnibox { display: flex; align-items: center; width: 2448px; height: 56px; border-radius: 28px; background: #1a1a1c; padding: 0 20px 0 22px; box-sizing: border-box; }
  .info { width: 28px; height: 28px; }
  .url { flex: 1; margin-left: 18px; color: #5d5d60; font-size: 28px; letter-spacing: .35px; }
  .url b { font-weight: 400; color: #909093; }
  .share { width: 24px; height: 30px; margin-right: 36px; }
  .star { width: 32px; height: 32px; }
  .toolbar .info { stroke: #6c6c6f; }
  .toolbar .share, .toolbar .star { stroke: #77777a; stroke-width: 2.300; }
  .toolbar .media { width: 34px; height: 28px; margin: 0 24px 0 28px; stroke-width: 4; stroke: #4d4c51; }
  .toolbar .media .solid { fill: #4d4c51; }
  .avatar { width: 44px; height: 44px; border-radius: 50%; background: #3c1b4d; color: #8e8297; font-size: 18px; line-height: 44px; text-align: center; }

  .page { display: flex; align-items: center; height: 105px; padding: 0 22px; color: #2a2a2b; font-size: 32px; white-space: nowrap; }
  .brand { width: 128px; height: 56px; margin-right: 48px; }
  .link { display: flex; align-items: center; box-sizing: border-box; letter-spacing: -.8px; height: 48px; }
  .nav-icon { width: 48px; height: 48px; fill: #2a2a2b; }
  .link.home { width: 181px; }
  .link.compass { width: 207px; }
  .link.bell { width: 279px; letter-spacing: -.65px; }
  .link.inbox { width: 173px; }
  .link.face { width: 184px; letter-spacing: -.6px; }
  .link.album { width: 246px; }
  .link.strong { font-weight: 700; letter-spacing: -.35px; }
  .link.drop { letter-spacing: -.3px; }
  .inbox .nav-icon { margin-right: -3px; }
  .face .nav-icon { margin-right: -1px; }
  .album .nav-icon { width: 42px; height: 42px; fill: #23421a; margin: 0 7px 0 4px; }
  .bell .nav-icon { width: 46px; height: 42px; margin: 0 0 0 -1px; }
  .arrow { width: 28px; height: 17px; margin: 2px 0 0 21px; fill: none; stroke: #2d3a78; stroke-width: 4.500; }

  .browser::after { content: ""; position: absolute; left: 638px; top: 366px; width: 1601px; height: 898px; border-radius: 20px; box-shadow: 0 24px 70px 10px #0009; }
  .dialog { left: 702px; top: 419px; width: 1601px; height: 898px; display: flex; border-radius: 20px; background: #231d28; overflow: hidden; font-size: 26px; color: #e9e7eb; }
  .dialog::after { content: ""; position: absolute; inset: 0; border-radius: 20px; box-shadow: inset 0 0 0 1px #000, inset 0 0 0 3px #57545c; pointer-events: none; }
  .sidebar { width: 270px; height: 898px; flex: none; box-sizing: border-box; padding: 2px 20px 0; background: #38363b; border-right: 2px solid #060507; overflow: hidden; }
  .sidebar h2 { margin: 32px 0 0 12px; height: 32px; line-height: 30px; font-size: 22px; font-weight: 600; color: #76747a; }
  .row { display: flex; align-items: center; height: 56px; padding-left: 15px; border-radius: 10px; width: 228px; box-sizing: border-box; white-space: nowrap; letter-spacing: -.5px; font-weight: 500; }
  .row.tagged { font-size: 25px; letter-spacing: -1px; }
  .row.selected { background: #504e54; }
  .row span { margin-left: 11px; height: 32px; line-height: 32px; }
  .side-icon { width: 34px; height: 34px; fill: none; stroke: #2290ff; stroke-width: 2.200; stroke-linecap: round; stroke-linejoin: round; }
  .side-icon.cloud, .side-icon.shared { stroke: #43cfe9; }
  .side-icon .solid { fill: #43cfe9; stroke: none; }
  .side-icon .hole { fill: #38363b; stroke: none; }
  .side-icon.disk { stroke: #8b898e; stroke-width: 2; }
  .side-icon .dot { stroke: none; }
  .side-icon.red { fill: #ff5f57; }
  .side-icon.orange { fill: #ffa71a; }
  .side-icon.yellow { fill: #fee133; }
  .eject { width: 20px; height: 20px; margin: 0 24px 0 auto; fill: #77757b; }

  .picker { flex: 1; display: flex; flex-direction: column; }
  .picker-bar { display: flex; align-items: center; height: 127px; padding: 1px 43px 1px 40px; box-sizing: border-box; border-bottom: 2px solid #38333e; }
  .btn { display: flex; align-items: center; justify-content: center; height: 40px; padding: 0; border: 0; border-radius: 10px; background: #5a565e; box-shadow: inset 0 2px 0 #716d75, 0 1px 2px #000a; color: #e9e7eb; font: 500 26px Inter, sans-serif; }
  .btn svg { fill: none; stroke: #e9e7eb; stroke-width: 2.300; stroke-linecap: round; stroke-linejoin: round; }
  .step { width: 46px; margin-right: 2px; }
  .step svg { width: 13px; height: 22px; margin: -3px 3px 0 0; }
  .step.off svg { stroke: #87848b; margin-right: 0; }
  .btn.view { width: 92px; margin-left: 14px; justify-content: flex-start; padding-left: 19px; }
  .btn.group { width: 90px; margin-left: 16px; justify-content: flex-start; padding-left: 18px; }
  .cols { width: 31px; height: 24px; margin-right: 14px; }
  .grid { width: 30px; height: 28px; margin-right: 14px; }
  .btn .chev { width: 16px; height: 10px; stroke-width: 3.200; }
  .btn.where { width: 414px; margin-left: 110px; justify-content: flex-start; padding: 0 4px 0 18px; letter-spacing: -.4px; }
  .dial { width: 26px; height: 26px; margin-right: 12px; }
  .btn .hands { fill: none; stroke: #55555a; stroke-width: 2; }
  .where span { margin-top: -2px; }
  .where i { width: 32px; height: 33px; margin-left: auto; border-radius: 8px; background: #2e62d8; display: grid; place-items: center; }
  .where i svg { width: 15px; height: 23px; stroke-width: 3.200; }
  .search { display: flex; align-items: center; width: 304px; height: 40px; margin-left: auto; box-sizing: border-box; padding: 1px 0 0 12px; border: 1px solid #3f3a45; border-bottom: 2px solid #56525b; border-radius: 10px; background: #2d2833; color: #69666d; letter-spacing: -.2px; }
  .search svg { width: 26px; height: 26px; margin-right: 15px; fill: none; stroke: #dddbe0; stroke-width: 2.400; stroke-linecap: round; }
  .columns { display: flex; height: 592px; }
  .columns div:first-child { width: 488px; border-right: 2px solid #060507; }
  .strip { height: 54px; border-top: 2px solid #3b3742; border-bottom: 2px solid #38333e; background: #221e29; }
  .actions { display: flex; padding: 40px 41px 0 40px; }
  .actions .btn { padding-bottom: 2px; letter-spacing: -.1px; }
  .options { width: 152px; }
  .cancel { width: 144px; margin-left: auto; margin-right: 16px; }
  .open { width: 144px; background: #38333d; box-shadow: inset 0 1px 0 #453f4a; color: #69656d; }

  .dock { left: 62px; top: 1692px; width: 2756px; height: 98px; display: flex; align-items: center; padding-left: 4px; border: 2px solid #453a58; border-radius: 28px; background: linear-gradient(90deg, #201432, #1f1338 40%, #24134a 58%, #471561 70%, #3a1459 79%, #26124a 86%, #211242); }
  .dock-cell { width: 80.900px; height: 98px; }
  .sep { width: 2px; height: 70px; background: #594977; margin: 0 16px 0 18px; }
  .sep.last { margin: 0 15px 0 18px; }
  .cal-month { font: 600 15px Inter, sans-serif; fill: #fff; text-anchor: middle; }
  .cal-day { font: 300 37px Inter, sans-serif; fill: #2b2b2d; text-anchor: middle; letter-spacing: -2px; }
  .tv-label { font: 500 27px Inter, sans-serif; fill: #fff; text-anchor: middle; letter-spacing: -1px; }
  .talk-label { font: 800 18px Inter, sans-serif; fill: #f9e24a; text-anchor: middle; letter-spacing: -.8px; }
</style>
